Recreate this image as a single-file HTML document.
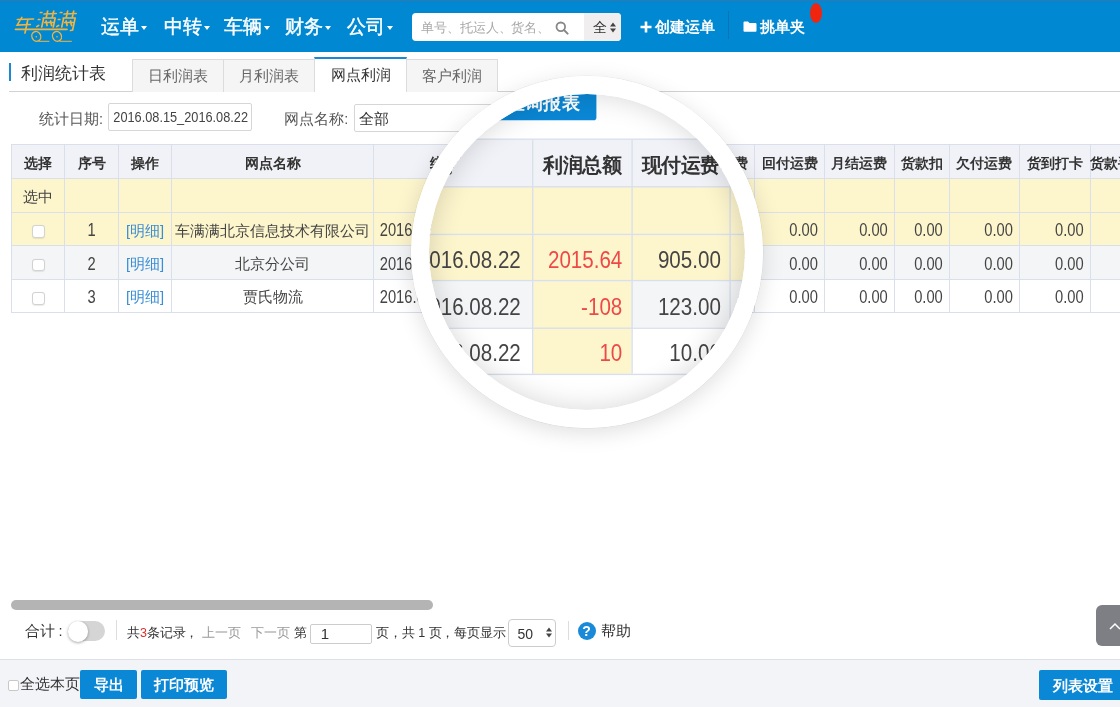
<!DOCTYPE html>
<html><head><meta charset="utf-8">
<style>
*{box-sizing:border-box}
html,body{margin:0;padding:0}
body{width:1120px;height:707px;overflow:hidden;position:relative;background:#fff;font-family:"Liberation Sans", sans-serif;color:#333}
.abs{position:absolute}
.cell{position:absolute;display:flex;align-items:center;padding:4.5px 6.6px 0 6.6px;font-size:14.7px;color:#444;white-space:nowrap;overflow:hidden}
.hd{font-weight:bold;font-size:14.2px;color:#333}
.num{display:inline-block;transform:translateY(-0.8px) scaleY(1.2)}
.lnk{color:#3a8ed6}
.red{color:#ee4848}
.cb{display:inline-block;width:12.5px;height:12.5px;border:1px solid #d2d2d2;border-radius:3px;background:#fff;box-shadow:0 0.5px 1px rgba(0,0,0,0.08);position:relative;top:0.5px;left:0.5px}
.lbl{position:absolute;font-size:14.5px;color:#555;white-space:nowrap;line-height:18px}
.txt{position:absolute;white-space:nowrap;line-height:18px}
.inp{position:absolute;border:1px solid #d6d6d6;background:#fff;border-radius:2px}
.btn{position:absolute;background:#0a87d5;color:#fff;font-weight:bold;display:flex;align-items:center;justify-content:center;border-radius:2px;white-space:nowrap}
.nav{position:absolute;top:14.8px;-webkit-text-stroke:0.45px #fff;font-size:19px;color:#fff;line-height:24px;white-space:nowrap}
.caret{display:inline-block;width:0;height:0;border-left:3.9px solid transparent;border-right:3.9px solid transparent;border-top:4.5px solid #fff;vertical-align:middle;margin-left:2px;position:relative;top:0px}
.tab{position:absolute;top:59.4px;height:32.6px;background:#f5f5f5;border:1px solid #dcdcdc;border-bottom:none;font-size:14.5px;color:#666;display:flex;align-items:center;justify-content:center;padding-top:0.5px}
</style></head><body>
<div style="position:absolute;left:0;top:0;width:1120px;height:707px;overflow:hidden;will-change:transform">
<!-- header -->
<div class="abs" style="left:0;top:0;width:1120px;height:52.3px;background:#0088d2;border-top:1px solid #2f79b0"></div>
<svg class="abs" style="left:0;top:0" width="90" height="52" viewBox="0 0 90 52">
 <g stroke="#f2b440" stroke-width="1.7" fill="none" stroke-linecap="round" transform="translate(4.5,0) skewX(-12)">
  <path d="M17 19.5 L33 19 M21 17.5 L18 25 L31 24.5 M27.5 20.5 L27.5 33"/>
  <path d="M38.5 12.5 L40 12.5 M38 19.5 L39.5 19.5 M38 26.5 L39.5 25.5 M42.5 14 L54.5 13.5 M45.5 11 L45.5 17 M51.5 11 L51.5 17 M42.5 18 L54.5 18 M43 18 L43 27 M54.5 18 L54.5 27 M46 21 L48 25.5 M50.5 21 L52.5 25.5 M45 22.5 L49 22.5 M49.5 22.5 L53 22.5"/>
  <path d="M58.5 12.5 L60 12.5 M58 19.5 L59.5 19.5 M58 26.5 L59.5 25.5 M62.5 14 L74.5 13.5 M65.5 11 L65.5 17 M71.5 11 L71.5 17 M62.5 18 L74.5 18 M63 18 L63 27 M74.5 18 L74.5 30 L72.5 30.5 M66 21 L68 25.5 M70.5 21 L72.5 25.5 M65 22.5 L69 22.5 M69.5 22.5 L73 22.5"/>
 </g>
 <g stroke="#f2b440" fill="none" stroke-linecap="round">
  <ellipse cx="36.3" cy="36.4" rx="4.4" ry="5" stroke-width="1.4" transform="rotate(-25 36.3 36.4)"/>
  <ellipse cx="57" cy="36.4" rx="4.4" ry="5" stroke-width="1.4" transform="rotate(-25 57 36.4)"/>
  <circle cx="36.3" cy="36.8" r="0.8" fill="#f2b440" stroke="none"/>
  <circle cx="57" cy="36.8" r="0.8" fill="#f2b440" stroke="none"/>
  <path d="M39 41.3 L49 41.3 M60 41.3 L71.4 41.3" stroke-width="1"/>
  <path d="M15.5 29.3 L67 29.3" stroke-width="1.8"/>
 </g>
</svg>
<div class="nav" style="left:100.6px">运单<span class="caret"></span></div>
<div class="nav" style="left:164px">中转<span class="caret"></span></div>
<div class="nav" style="left:224.3px">车辆<span class="caret"></span></div>
<div class="nav" style="left:285px">财务<span class="caret"></span></div>
<div class="nav" style="left:347.2px">公司<span class="caret"></span></div>
<!-- search -->
<div class="abs" style="left:412.2px;top:12.6px;width:208.4px;height:28.3px;background:#fff;border-radius:4px;overflow:hidden">
  <div class="abs" style="left:9px;top:6px;font-size:12.5px;letter-spacing:-0.1px;color:#a8a8a8;white-space:nowrap;width:125px;padding-top:1px;overflow:hidden;line-height:16px">单号、托运人、货名、手机号</div>
  <svg class="abs" style="left:143px;top:8px" width="14" height="14" viewBox="0 0 14 14"><circle cx="5.8" cy="5.8" r="4.3" stroke="#888" stroke-width="1.8" fill="none"/><path d="M9 9 L12.6 12.6" stroke="#888" stroke-width="2" stroke-linecap="round"/></svg>
  <div class="abs" style="left:171.8px;top:0;width:37px;height:28.3px;background:#f0eeee"></div>
  <div class="abs" style="left:181px;top:6px;font-size:14px;color:#333;line-height:17px">全</div>
  <svg class="abs" style="left:198px;top:9px" width="6" height="11" viewBox="0 0 6 11"><path d="M0 4.5 L3 0.5 L6 4.5 Z M0 6.5 L3 10.5 L6 6.5 Z" fill="#444"/></svg>
</div>
<div class="abs" style="left:639.8px;top:16px;font-size:15px;font-weight:bold;color:#fff;line-height:22px;white-space:nowrap"><span style="display:inline-block;width:15px;position:relative">
 <svg width="12" height="12" viewBox="0 0 12 12" style="position:relative;top:1px"><path d="M6 0.5 V11.5 M0.5 6 H11.5" stroke="#fff" stroke-width="2.6"/></svg></span>创建运单</div>
<div class="abs" style="left:727.5px;top:10.7px;width:1px;height:28.3px;background:#0b74b8"></div>
<svg class="abs" style="left:742.5px;top:20.5px" width="14" height="11" viewBox="0 0 14 11"><path d="M0.5 1.5 Q0.5 0.5 1.5 0.5 L5 0.5 L6.5 2 L12.5 2 Q13.5 2 13.5 3 L13.5 10 Q13.5 10.8 12.5 10.8 L1.5 10.8 Q0.5 10.8 0.5 10 Z" fill="#fff"/></svg>
<div class="abs" style="left:760px;top:16px;font-size:15px;font-weight:bold;color:#fff;line-height:22px;white-space:nowrap">挑单夹</div>
<div class="abs" style="left:809.5px;top:2.7px;width:12.5px;height:20.5px;border-radius:50%;background:#f0250f"></div>
<!-- title & tabs -->
<div class="abs" style="left:9px;top:63.4px;width:2.2px;height:17.9px;background:#1b88d6"></div>
<div class="abs" style="left:21px;top:62.7px;font-size:17px;color:#333;line-height:22px;white-space:nowrap">利润统计表</div>
<div class="abs" style="left:9px;top:91px;width:1111px;height:1px;background:#d2d2d2"></div>
<div class="tab" style="left:132.4px;width:91.8px">日利润表</div>
<div class="tab" style="left:223.2px;width:92.2px">月利润表</div>
<div class="tab" style="left:406.3px;width:92.2px">客户利润</div>
<div class="tab" style="left:314.4px;width:92.9px;top:56.7px;height:35.8px;background:#fff;border-top:2px solid #1b88d6;color:#333">网点利润</div>
<!-- main content -->

<div class="lbl" style="left:39px;top:109.5px">统计日期:</div>
<div class="inp" style="left:107.5px;top:103.3px;width:144px;height:28px"></div>
<div class="txt" style="left:113.3px;top:109px;font-size:12.75px;color:#444;transform:scaleY(1.16);transform-origin:0 60%">2016.08.15_2016.08.22</div>
<div class="lbl" style="left:284.3px;top:109.5px">网点名称:</div>
<div class="inp" style="left:353.75px;top:103.5px;width:150px;height:28px"></div>
<div class="txt" style="left:359px;top:109.5px;font-size:14.5px;color:#333">全部</div>
<div class="btn" style="left:513px;top:103.5px;width:76.4px;height:27.7px;font-size:12.8px;padding-top:4px">查询报表</div>
<div style="position:absolute;left:11.25px;top:144.9px;width:1148.95px;height:33.29999999999998px;background:#f0f2f7"></div>
<div style="position:absolute;left:11.25px;top:178.2px;width:1148.95px;height:34.0px;background:#fdf5cc"></div>
<div style="position:absolute;left:11.25px;top:212.2px;width:1148.95px;height:33.5px;background:#fdf5cc"></div>
<div style="position:absolute;left:11.25px;top:245.7px;width:1148.95px;height:33.30000000000001px;background:#f4f5f6"></div>
<div style="position:absolute;left:11.25px;top:279.0px;width:1148.95px;height:33.39999999999998px;background:#ffffff"></div>
<div style="position:absolute;left:543.7px;top:245.7px;width:70.39999999999998px;height:66.69999999999999px;background:#fdf5cc"></div>
<div style="position:absolute;left:11.25px;top:144.4px;width:1148.95px;height:1px;background:#d9e0eb"></div>
<div style="position:absolute;left:11.25px;top:177.7px;width:1148.95px;height:1px;background:#d9e0eb"></div>
<div style="position:absolute;left:11.25px;top:211.7px;width:1148.95px;height:1px;background:#d9e0eb"></div>
<div style="position:absolute;left:11.25px;top:245.2px;width:1148.95px;height:1px;background:#d9e0eb"></div>
<div style="position:absolute;left:11.25px;top:278.5px;width:1148.95px;height:1px;background:#d9e0eb"></div>
<div style="position:absolute;left:11.25px;top:311.9px;width:1148.95px;height:1px;background:#d9e0eb"></div>
<div style="position:absolute;left:10.75px;top:144.9px;width:1px;height:167.49999999999997px;background:#d9e0eb"></div>
<div style="position:absolute;left:64.4px;top:144.9px;width:1px;height:167.49999999999997px;background:#d9e0eb"></div>
<div style="position:absolute;left:117.8px;top:144.9px;width:1px;height:167.49999999999997px;background:#d9e0eb"></div>
<div style="position:absolute;left:171.4px;top:144.9px;width:1px;height:167.49999999999997px;background:#d9e0eb"></div>
<div style="position:absolute;left:372.7px;top:144.9px;width:1px;height:167.49999999999997px;background:#d9e0eb"></div>
<div style="position:absolute;left:543.2px;top:144.9px;width:1px;height:167.49999999999997px;background:#d9e0eb"></div>
<div style="position:absolute;left:613.6px;top:144.9px;width:1px;height:167.49999999999997px;background:#d9e0eb"></div>
<div style="position:absolute;left:684.0px;top:144.9px;width:1px;height:167.49999999999997px;background:#d9e0eb"></div>
<div style="position:absolute;left:754.4px;top:144.9px;width:1px;height:167.49999999999997px;background:#d9e0eb"></div>
<div style="position:absolute;left:824.0px;top:144.9px;width:1px;height:167.49999999999997px;background:#d9e0eb"></div>
<div style="position:absolute;left:893.9px;top:144.9px;width:1px;height:167.49999999999997px;background:#d9e0eb"></div>
<div style="position:absolute;left:948.9px;top:144.9px;width:1px;height:167.49999999999997px;background:#d9e0eb"></div>
<div style="position:absolute;left:1019.0px;top:144.9px;width:1px;height:167.49999999999997px;background:#d9e0eb"></div>
<div style="position:absolute;left:1089.7px;top:144.9px;width:1px;height:167.49999999999997px;background:#d9e0eb"></div>
<div class="cell hd" style="left:11.25px;top:144.9px;width:53.650000000000006px;height:33.29999999999998px;justify-content:center">选择</div>
<div class="cell hd" style="left:64.9px;top:144.9px;width:53.39999999999999px;height:33.29999999999998px;justify-content:center">序号</div>
<div class="cell hd" style="left:118.3px;top:144.9px;width:53.60000000000001px;height:33.29999999999998px;justify-content:center">操作</div>
<div class="cell hd" style="left:171.9px;top:144.9px;width:201.29999999999998px;height:33.29999999999998px;justify-content:center">网点名称</div>
<div class="cell hd" style="left:373.2px;top:144.9px;width:170.50000000000006px;height:33.29999999999998px;justify-content:center">统计日期</div>
<div class="cell hd" style="left:543.7px;top:144.9px;width:70.39999999999998px;height:33.29999999999998px;justify-content:center">利润总额</div>
<div class="cell hd" style="left:614.1px;top:144.9px;width:70.39999999999998px;height:33.29999999999998px;justify-content:center">现付运费</div>
<div class="cell hd" style="left:684.5px;top:144.9px;width:70.39999999999998px;height:33.29999999999998px;justify-content:center">提付运费</div>
<div class="cell hd" style="left:754.9px;top:144.9px;width:69.60000000000002px;height:33.29999999999998px;justify-content:center">回付运费</div>
<div class="cell hd" style="left:824.5px;top:144.9px;width:69.89999999999998px;height:33.29999999999998px;justify-content:center">月结运费</div>
<div class="cell hd" style="left:894.4px;top:144.9px;width:55.0px;height:33.29999999999998px;justify-content:center">货款扣</div>
<div class="cell hd" style="left:949.4px;top:144.9px;width:70.10000000000002px;height:33.29999999999998px;justify-content:center">欠付运费</div>
<div class="cell hd" style="left:1019.5px;top:144.9px;width:70.70000000000005px;height:33.29999999999998px;justify-content:center">货到打卡</div>
<div class="cell hd" style="left:1090.2px;top:144.9px;width:70.0px;height:33.29999999999998px;justify-content:center">货款手续费</div>
<div class="cell" style="left:11.25px;top:178.2px;width:53.650000000000006px;height:34.0px;justify-content:center">选中</div>
<div class="cell" style="left:11.25px;top:212.2px;width:53.650000000000006px;height:33.5px;justify-content:center"><span class="cb"></span></div>
<div class="cell" style="left:64.9px;top:212.2px;width:53.39999999999999px;height:33.5px;justify-content:center"><span class="num">1</span></div>
<div class="cell lnk" style="left:118.3px;top:212.2px;width:53.60000000000001px;height:33.5px;justify-content:center">[明细]</div>
<div class="cell" style="left:171.9px;top:212.2px;width:201.29999999999998px;height:33.5px;justify-content:center">车满满北京信息技术有限公司</div>
<div class="cell" style="left:373.2px;top:212.2px;width:170.50000000000006px;height:33.5px;justify-content:flex-start"><span class="num">2016.08.15_2016.08.22</span></div>
<div class="cell red" style="left:543.7px;top:212.2px;width:70.39999999999998px;height:33.5px;justify-content:flex-end"><span class="num">2015.64</span></div>
<div class="cell" style="left:614.1px;top:212.2px;width:70.39999999999998px;height:33.5px;justify-content:flex-end"><span class="num">905.00</span></div>
<div class="cell" style="left:684.5px;top:212.2px;width:70.39999999999998px;height:33.5px;justify-content:flex-end"><span class="num">1110.64</span></div>
<div class="cell" style="left:754.9px;top:212.2px;width:69.60000000000002px;height:33.5px;justify-content:flex-end"><span class="num">0.00</span></div>
<div class="cell" style="left:824.5px;top:212.2px;width:69.89999999999998px;height:33.5px;justify-content:flex-end"><span class="num">0.00</span></div>
<div class="cell" style="left:894.4px;top:212.2px;width:55.0px;height:33.5px;justify-content:flex-end"><span class="num">0.00</span></div>
<div class="cell" style="left:949.4px;top:212.2px;width:70.10000000000002px;height:33.5px;justify-content:flex-end"><span class="num">0.00</span></div>
<div class="cell" style="left:1019.5px;top:212.2px;width:70.70000000000005px;height:33.5px;justify-content:flex-end"><span class="num">0.00</span></div>
<div class="cell" style="left:11.25px;top:245.7px;width:53.650000000000006px;height:33.30000000000001px;justify-content:center"><span class="cb"></span></div>
<div class="cell" style="left:64.9px;top:245.7px;width:53.39999999999999px;height:33.30000000000001px;justify-content:center"><span class="num">2</span></div>
<div class="cell lnk" style="left:118.3px;top:245.7px;width:53.60000000000001px;height:33.30000000000001px;justify-content:center">[明细]</div>
<div class="cell" style="left:171.9px;top:245.7px;width:201.29999999999998px;height:33.30000000000001px;justify-content:center">北京分公司</div>
<div class="cell" style="left:373.2px;top:245.7px;width:170.50000000000006px;height:33.30000000000001px;justify-content:flex-start"><span class="num">2016.08.15_2016.08.22</span></div>
<div class="cell red" style="left:543.7px;top:245.7px;width:70.39999999999998px;height:33.30000000000001px;justify-content:flex-end"><span class="num">-108</span></div>
<div class="cell" style="left:614.1px;top:245.7px;width:70.39999999999998px;height:33.30000000000001px;justify-content:flex-end"><span class="num">123.00</span></div>
<div class="cell" style="left:684.5px;top:245.7px;width:70.39999999999998px;height:33.30000000000001px;justify-content:flex-end"><span class="num">0.00</span></div>
<div class="cell" style="left:754.9px;top:245.7px;width:69.60000000000002px;height:33.30000000000001px;justify-content:flex-end"><span class="num">0.00</span></div>
<div class="cell" style="left:824.5px;top:245.7px;width:69.89999999999998px;height:33.30000000000001px;justify-content:flex-end"><span class="num">0.00</span></div>
<div class="cell" style="left:894.4px;top:245.7px;width:55.0px;height:33.30000000000001px;justify-content:flex-end"><span class="num">0.00</span></div>
<div class="cell" style="left:949.4px;top:245.7px;width:70.10000000000002px;height:33.30000000000001px;justify-content:flex-end"><span class="num">0.00</span></div>
<div class="cell" style="left:1019.5px;top:245.7px;width:70.70000000000005px;height:33.30000000000001px;justify-content:flex-end"><span class="num">0.00</span></div>
<div class="cell" style="left:11.25px;top:279.0px;width:53.650000000000006px;height:33.39999999999998px;justify-content:center"><span class="cb"></span></div>
<div class="cell" style="left:64.9px;top:279.0px;width:53.39999999999999px;height:33.39999999999998px;justify-content:center"><span class="num">3</span></div>
<div class="cell lnk" style="left:118.3px;top:279.0px;width:53.60000000000001px;height:33.39999999999998px;justify-content:center">[明细]</div>
<div class="cell" style="left:171.9px;top:279.0px;width:201.29999999999998px;height:33.39999999999998px;justify-content:center">贾氏物流</div>
<div class="cell" style="left:373.2px;top:279.0px;width:170.50000000000006px;height:33.39999999999998px;justify-content:flex-start"><span class="num">2016.08.15_2016.08.22</span></div>
<div class="cell red" style="left:543.7px;top:279.0px;width:70.39999999999998px;height:33.39999999999998px;justify-content:flex-end"><span class="num">10</span></div>
<div class="cell" style="left:614.1px;top:279.0px;width:70.39999999999998px;height:33.39999999999998px;justify-content:flex-end"><span class="num">10.00</span></div>
<div class="cell" style="left:684.5px;top:279.0px;width:70.39999999999998px;height:33.39999999999998px;justify-content:flex-end"><span class="num">0.00</span></div>
<div class="cell" style="left:754.9px;top:279.0px;width:69.60000000000002px;height:33.39999999999998px;justify-content:flex-end"><span class="num">0.00</span></div>
<div class="cell" style="left:824.5px;top:279.0px;width:69.89999999999998px;height:33.39999999999998px;justify-content:flex-end"><span class="num">0.00</span></div>
<div class="cell" style="left:894.4px;top:279.0px;width:55.0px;height:33.39999999999998px;justify-content:flex-end"><span class="num">0.00</span></div>
<div class="cell" style="left:949.4px;top:279.0px;width:70.10000000000002px;height:33.39999999999998px;justify-content:flex-end"><span class="num">0.00</span></div>
<div class="cell" style="left:1019.5px;top:279.0px;width:70.70000000000005px;height:33.39999999999998px;justify-content:flex-end"><span class="num">0.00</span></div>
<!-- scrollbar / pager -->
<div class="abs" style="left:11.4px;top:600px;width:422px;height:10px;border-radius:5px;background:#b4b4b4"></div>
<div class="abs" style="left:24.6px;top:621px;font-size:14.5px;color:#333;line-height:20px;white-space:nowrap">合计<span style="margin-left:4px">:</span></div>
<div class="abs" style="left:68px;top:621.4px;width:37px;height:20px;border-radius:10px;background:#d5d5d5"></div>
<div class="abs" style="left:67.5px;top:621px;width:20.5px;height:20.5px;border-radius:50%;background:#fff;box-shadow:0 1px 3px rgba(0,0,0,0.35)"></div>
<div class="abs" style="left:116px;top:620px;width:1px;height:20px;background:#ddd"></div>
<div class="abs" style="left:127px;top:625px;font-size:12.5px;letter-spacing:-0.1px;color:#333;line-height:17px;white-space:nowrap">共<span style="color:#d9302c">3</span>条记录，</div>
<div class="abs" style="left:202.4px;top:625px;font-size:12.5px;letter-spacing:-0.1px;color:#999;line-height:17px;white-space:nowrap">上一页</div>
<div class="abs" style="left:251px;top:625px;font-size:12.5px;letter-spacing:-0.1px;color:#999;line-height:17px;white-space:nowrap">下一页</div>
<div class="abs" style="left:293.5px;top:625px;font-size:12.5px;letter-spacing:-0.1px;color:#333;line-height:17px;white-space:nowrap">第</div>
<div class="abs" style="left:310.25px;top:623.5px;width:62.2px;height:20.2px;border:1px solid #ccc;border-radius:2px"></div>
<div class="abs" style="left:320.7px;top:624px;font-size:15px;color:#333;line-height:19px">1</div>
<div class="abs" style="left:376.25px;top:625px;font-size:12.5px;letter-spacing:-0.1px;color:#333;line-height:17px;white-space:nowrap">页，共 1 页，每页显示</div>
<div class="abs" style="left:508.25px;top:619.25px;width:47.3px;height:27.8px;border:1px solid #ccc;border-radius:4px"></div>
<div class="abs" style="left:517.5px;top:625px;font-size:14px;color:#333;line-height:19px">50</div>
<svg class="abs" style="left:545.5px;top:627px" width="6" height="11" viewBox="0 0 6 11"><path d="M0 4.5 L3 0.5 L6 4.5 Z M0 6.5 L3 10.5 L6 6.5 Z" fill="#444"/></svg>
<div class="abs" style="left:567.5px;top:621px;width:1px;height:19px;background:#ddd"></div>
<div class="abs" style="left:577.5px;top:622px;width:18px;height:18px;border-radius:50%;background:#1a8ad8;color:#fff;font-weight:bold;font-size:14px;line-height:18px;text-align:center">?</div>
<div class="abs" style="left:600.5px;top:621px;font-size:15px;color:#333;line-height:20px;white-space:nowrap">帮助</div>
<div class="abs" style="left:1096px;top:605.3px;width:40px;height:41px;border-radius:6px;background:#7d7f85"></div>
<svg class="abs" style="left:1109px;top:622px" width="11" height="8" viewBox="0 0 11 8"><path d="M1 7 L6 2 L11 7" stroke="#fff" stroke-width="1.5" fill="none"/></svg>
<!-- bottom bar -->
<div class="abs" style="left:0;top:658.5px;width:1120px;height:48.5px;background:#f3f4f8;border-top:1px solid #dde0e8"></div>
<div class="abs" style="left:7.5px;top:680px;width:11.5px;height:11px;border:1px solid #c8c8c8;border-radius:2px;background:#fff"></div>
<div class="abs" style="left:20.4px;top:673.5px;font-size:14.5px;color:#333;line-height:20px;white-space:nowrap">全选本页</div>
<div class="btn" style="left:80.4px;top:670.4px;width:56.3px;height:28.5px;font-size:14.5px;padding-top:2px">导出</div>
<div class="btn" style="left:141px;top:670.4px;width:85.5px;height:28.5px;font-size:14.5px;padding-top:2px">打印预览</div>
<div class="btn" style="left:1039px;top:670px;width:90px;height:29.6px;font-size:14.5px;justify-content:flex-start;padding-left:13.5px;padding-top:3px">列表设置</div>
<!-- lens -->
<div class="abs" style="left:0;top:0;width:1120px;height:707px;clip-path:circle(158px at 587px 252px);background:#fff">
  <div class="abs" style="left:0;top:0;width:1120px;height:707px;transform-origin:0 0;transform:translate(-228.2px,-63.1px) scale(1.4)">
  
<div class="lbl" style="left:39px;top:109.5px">统计日期:</div>
<div class="inp" style="left:107.5px;top:103.3px;width:144px;height:28px"></div>
<div class="txt" style="left:113.3px;top:109px;font-size:12.75px;color:#444;transform:scaleY(1.16);transform-origin:0 60%">2016.08.15_2016.08.22</div>
<div class="lbl" style="left:284.3px;top:109.5px">网点名称:</div>
<div class="inp" style="left:353.75px;top:103.5px;width:150px;height:28px"></div>
<div class="txt" style="left:359px;top:109.5px;font-size:14.5px;color:#333">全部</div>
<div class="btn" style="left:513px;top:103.5px;width:76.4px;height:27.7px;font-size:12.8px;padding-top:4px">查询报表</div>
<div style="position:absolute;left:11.25px;top:144.9px;width:1148.95px;height:33.29999999999998px;background:#f0f2f7"></div>
<div style="position:absolute;left:11.25px;top:178.2px;width:1148.95px;height:34.0px;background:#fdf5cc"></div>
<div style="position:absolute;left:11.25px;top:212.2px;width:1148.95px;height:33.5px;background:#fdf5cc"></div>
<div style="position:absolute;left:11.25px;top:245.7px;width:1148.95px;height:33.30000000000001px;background:#f4f5f6"></div>
<div style="position:absolute;left:11.25px;top:279.0px;width:1148.95px;height:33.39999999999998px;background:#ffffff"></div>
<div style="position:absolute;left:543.7px;top:245.7px;width:70.39999999999998px;height:66.69999999999999px;background:#fdf5cc"></div>
<div style="position:absolute;left:11.25px;top:144.4px;width:1148.95px;height:1px;background:#d9e0eb"></div>
<div style="position:absolute;left:11.25px;top:177.7px;width:1148.95px;height:1px;background:#d9e0eb"></div>
<div style="position:absolute;left:11.25px;top:211.7px;width:1148.95px;height:1px;background:#d9e0eb"></div>
<div style="position:absolute;left:11.25px;top:245.2px;width:1148.95px;height:1px;background:#d9e0eb"></div>
<div style="position:absolute;left:11.25px;top:278.5px;width:1148.95px;height:1px;background:#d9e0eb"></div>
<div style="position:absolute;left:11.25px;top:311.9px;width:1148.95px;height:1px;background:#d9e0eb"></div>
<div style="position:absolute;left:10.75px;top:144.9px;width:1px;height:167.49999999999997px;background:#d9e0eb"></div>
<div style="position:absolute;left:64.4px;top:144.9px;width:1px;height:167.49999999999997px;background:#d9e0eb"></div>
<div style="position:absolute;left:117.8px;top:144.9px;width:1px;height:167.49999999999997px;background:#d9e0eb"></div>
<div style="position:absolute;left:171.4px;top:144.9px;width:1px;height:167.49999999999997px;background:#d9e0eb"></div>
<div style="position:absolute;left:372.7px;top:144.9px;width:1px;height:167.49999999999997px;background:#d9e0eb"></div>
<div style="position:absolute;left:543.2px;top:144.9px;width:1px;height:167.49999999999997px;background:#d9e0eb"></div>
<div style="position:absolute;left:613.6px;top:144.9px;width:1px;height:167.49999999999997px;background:#d9e0eb"></div>
<div style="position:absolute;left:684.0px;top:144.9px;width:1px;height:167.49999999999997px;background:#d9e0eb"></div>
<div style="position:absolute;left:754.4px;top:144.9px;width:1px;height:167.49999999999997px;background:#d9e0eb"></div>
<div style="position:absolute;left:824.0px;top:144.9px;width:1px;height:167.49999999999997px;background:#d9e0eb"></div>
<div style="position:absolute;left:893.9px;top:144.9px;width:1px;height:167.49999999999997px;background:#d9e0eb"></div>
<div style="position:absolute;left:948.9px;top:144.9px;width:1px;height:167.49999999999997px;background:#d9e0eb"></div>
<div style="position:absolute;left:1019.0px;top:144.9px;width:1px;height:167.49999999999997px;background:#d9e0eb"></div>
<div style="position:absolute;left:1089.7px;top:144.9px;width:1px;height:167.49999999999997px;background:#d9e0eb"></div>
<div class="cell hd" style="left:11.25px;top:144.9px;width:53.650000000000006px;height:33.29999999999998px;justify-content:center">选择</div>
<div class="cell hd" style="left:64.9px;top:144.9px;width:53.39999999999999px;height:33.29999999999998px;justify-content:center">序号</div>
<div class="cell hd" style="left:118.3px;top:144.9px;width:53.60000000000001px;height:33.29999999999998px;justify-content:center">操作</div>
<div class="cell hd" style="left:171.9px;top:144.9px;width:201.29999999999998px;height:33.29999999999998px;justify-content:center">网点名称</div>
<div class="cell hd" style="left:373.2px;top:144.9px;width:170.50000000000006px;height:33.29999999999998px;justify-content:center">统计日期</div>
<div class="cell hd" style="left:543.7px;top:144.9px;width:70.39999999999998px;height:33.29999999999998px;justify-content:center">利润总额</div>
<div class="cell hd" style="left:614.1px;top:144.9px;width:70.39999999999998px;height:33.29999999999998px;justify-content:center">现付运费</div>
<div class="cell hd" style="left:684.5px;top:144.9px;width:70.39999999999998px;height:33.29999999999998px;justify-content:center">提付运费</div>
<div class="cell hd" style="left:754.9px;top:144.9px;width:69.60000000000002px;height:33.29999999999998px;justify-content:center">回付运费</div>
<div class="cell hd" style="left:824.5px;top:144.9px;width:69.89999999999998px;height:33.29999999999998px;justify-content:center">月结运费</div>
<div class="cell hd" style="left:894.4px;top:144.9px;width:55.0px;height:33.29999999999998px;justify-content:center">货款扣</div>
<div class="cell hd" style="left:949.4px;top:144.9px;width:70.10000000000002px;height:33.29999999999998px;justify-content:center">欠付运费</div>
<div class="cell hd" style="left:1019.5px;top:144.9px;width:70.70000000000005px;height:33.29999999999998px;justify-content:center">货到打卡</div>
<div class="cell hd" style="left:1090.2px;top:144.9px;width:70.0px;height:33.29999999999998px;justify-content:center">货款手续费</div>
<div class="cell" style="left:11.25px;top:178.2px;width:53.650000000000006px;height:34.0px;justify-content:center">选中</div>
<div class="cell" style="left:11.25px;top:212.2px;width:53.650000000000006px;height:33.5px;justify-content:center"><span class="cb"></span></div>
<div class="cell" style="left:64.9px;top:212.2px;width:53.39999999999999px;height:33.5px;justify-content:center"><span class="num">1</span></div>
<div class="cell lnk" style="left:118.3px;top:212.2px;width:53.60000000000001px;height:33.5px;justify-content:center">[明细]</div>
<div class="cell" style="left:171.9px;top:212.2px;width:201.29999999999998px;height:33.5px;justify-content:center">车满满北京信息技术有限公司</div>
<div class="cell" style="left:373.2px;top:212.2px;width:170.50000000000006px;height:33.5px;justify-content:flex-start"><span class="num">2016.08.15_2016.08.22</span></div>
<div class="cell red" style="left:543.7px;top:212.2px;width:70.39999999999998px;height:33.5px;justify-content:flex-end"><span class="num">2015.64</span></div>
<div class="cell" style="left:614.1px;top:212.2px;width:70.39999999999998px;height:33.5px;justify-content:flex-end"><span class="num">905.00</span></div>
<div class="cell" style="left:684.5px;top:212.2px;width:70.39999999999998px;height:33.5px;justify-content:flex-end"><span class="num">1110.64</span></div>
<div class="cell" style="left:754.9px;top:212.2px;width:69.60000000000002px;height:33.5px;justify-content:flex-end"><span class="num">0.00</span></div>
<div class="cell" style="left:824.5px;top:212.2px;width:69.89999999999998px;height:33.5px;justify-content:flex-end"><span class="num">0.00</span></div>
<div class="cell" style="left:894.4px;top:212.2px;width:55.0px;height:33.5px;justify-content:flex-end"><span class="num">0.00</span></div>
<div class="cell" style="left:949.4px;top:212.2px;width:70.10000000000002px;height:33.5px;justify-content:flex-end"><span class="num">0.00</span></div>
<div class="cell" style="left:1019.5px;top:212.2px;width:70.70000000000005px;height:33.5px;justify-content:flex-end"><span class="num">0.00</span></div>
<div class="cell" style="left:11.25px;top:245.7px;width:53.650000000000006px;height:33.30000000000001px;justify-content:center"><span class="cb"></span></div>
<div class="cell" style="left:64.9px;top:245.7px;width:53.39999999999999px;height:33.30000000000001px;justify-content:center"><span class="num">2</span></div>
<div class="cell lnk" style="left:118.3px;top:245.7px;width:53.60000000000001px;height:33.30000000000001px;justify-content:center">[明细]</div>
<div class="cell" style="left:171.9px;top:245.7px;width:201.29999999999998px;height:33.30000000000001px;justify-content:center">北京分公司</div>
<div class="cell" style="left:373.2px;top:245.7px;width:170.50000000000006px;height:33.30000000000001px;justify-content:flex-start"><span class="num">2016.08.15_2016.08.22</span></div>
<div class="cell red" style="left:543.7px;top:245.7px;width:70.39999999999998px;height:33.30000000000001px;justify-content:flex-end"><span class="num">-108</span></div>
<div class="cell" style="left:614.1px;top:245.7px;width:70.39999999999998px;height:33.30000000000001px;justify-content:flex-end"><span class="num">123.00</span></div>
<div class="cell" style="left:684.5px;top:245.7px;width:70.39999999999998px;height:33.30000000000001px;justify-content:flex-end"><span class="num">0.00</span></div>
<div class="cell" style="left:754.9px;top:245.7px;width:69.60000000000002px;height:33.30000000000001px;justify-content:flex-end"><span class="num">0.00</span></div>
<div class="cell" style="left:824.5px;top:245.7px;width:69.89999999999998px;height:33.30000000000001px;justify-content:flex-end"><span class="num">0.00</span></div>
<div class="cell" style="left:894.4px;top:245.7px;width:55.0px;height:33.30000000000001px;justify-content:flex-end"><span class="num">0.00</span></div>
<div class="cell" style="left:949.4px;top:245.7px;width:70.10000000000002px;height:33.30000000000001px;justify-content:flex-end"><span class="num">0.00</span></div>
<div class="cell" style="left:1019.5px;top:245.7px;width:70.70000000000005px;height:33.30000000000001px;justify-content:flex-end"><span class="num">0.00</span></div>
<div class="cell" style="left:11.25px;top:279.0px;width:53.650000000000006px;height:33.39999999999998px;justify-content:center"><span class="cb"></span></div>
<div class="cell" style="left:64.9px;top:279.0px;width:53.39999999999999px;height:33.39999999999998px;justify-content:center"><span class="num">3</span></div>
<div class="cell lnk" style="left:118.3px;top:279.0px;width:53.60000000000001px;height:33.39999999999998px;justify-content:center">[明细]</div>
<div class="cell" style="left:171.9px;top:279.0px;width:201.29999999999998px;height:33.39999999999998px;justify-content:center">贾氏物流</div>
<div class="cell" style="left:373.2px;top:279.0px;width:170.50000000000006px;height:33.39999999999998px;justify-content:flex-start"><span class="num">2016.08.15_2016.08.22</span></div>
<div class="cell red" style="left:543.7px;top:279.0px;width:70.39999999999998px;height:33.39999999999998px;justify-content:flex-end"><span class="num">10</span></div>
<div class="cell" style="left:614.1px;top:279.0px;width:70.39999999999998px;height:33.39999999999998px;justify-content:flex-end"><span class="num">10.00</span></div>
<div class="cell" style="left:684.5px;top:279.0px;width:70.39999999999998px;height:33.39999999999998px;justify-content:flex-end"><span class="num">0.00</span></div>
<div class="cell" style="left:754.9px;top:279.0px;width:69.60000000000002px;height:33.39999999999998px;justify-content:flex-end"><span class="num">0.00</span></div>
<div class="cell" style="left:824.5px;top:279.0px;width:69.89999999999998px;height:33.39999999999998px;justify-content:flex-end"><span class="num">0.00</span></div>
<div class="cell" style="left:894.4px;top:279.0px;width:55.0px;height:33.39999999999998px;justify-content:flex-end"><span class="num">0.00</span></div>
<div class="cell" style="left:949.4px;top:279.0px;width:70.10000000000002px;height:33.39999999999998px;justify-content:flex-end"><span class="num">0.00</span></div>
<div class="cell" style="left:1019.5px;top:279.0px;width:70.70000000000005px;height:33.39999999999998px;justify-content:flex-end"><span class="num">0.00</span></div>
  </div>
</div>
<div class="abs" style="left:410.5px;top:75.5px;width:352px;height:352px;border-radius:50%;border:18px solid #fff;box-shadow:0 0 0 0.6px rgba(0,0,0,0.07), 0 5px 22px rgba(0,0,0,0.13), inset 0 0 28px rgba(0,0,0,0.16)"></div>
</div>
</body></html>
